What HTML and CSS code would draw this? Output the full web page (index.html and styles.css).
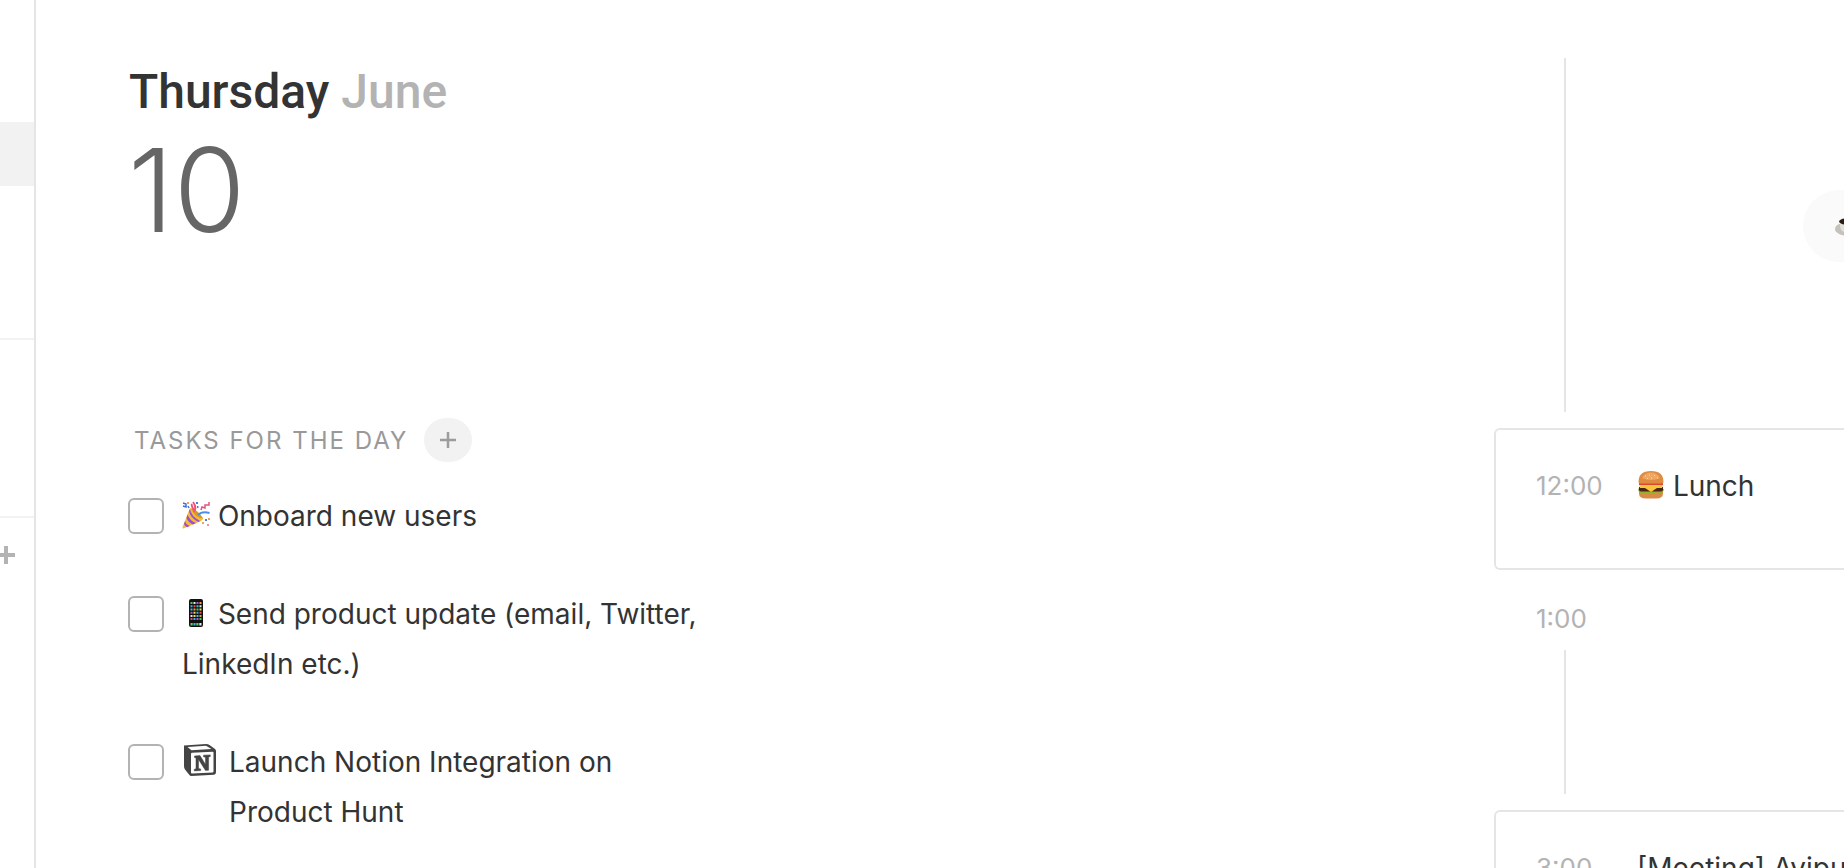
FILE: index.html
```html
<!DOCTYPE html>
<html lang="en">
<head>
<meta charset="utf-8">
<title>Thursday, June 10</title>
<link rel="stylesheet" href="styles.css">
</head>
<body>
<div class="app">
  <aside class="sidebar">
    <div class="side-block side-top"><div class="side-active"></div></div>
    <div class="side-block side-middle"></div>
    <button class="side-add" aria-label="Add list">
      <svg width="20" height="20" viewBox="0 0 20 20"><path d="M10 1v18M1 10h18" stroke="#b3b3b3" stroke-width="4"/></svg>
    </button>
  </aside>

  <main class="day">
    <h1 class="weekday">Thursday <span class="month">June</span></h1>
    <p class="date">10</p>

    <section class="tasks">
      <div class="tasks-head">
        <h2 class="tasks-title">TASKS FOR THE DAY</h2>
        <button class="add-task" aria-label="Add task">
          <svg width="16" height="16" viewBox="0 0 16 16"><path d="M8 0v16M0 8h16" stroke="#9c9c9c" stroke-width="2.500"/></svg>
        </button>
      </div>
      <ul class="task-list">
        <li class="task">
          <input class="check" type="checkbox" id="t1">
          <label class="task-label" for="t1"><svg class="emoji" viewBox="0 0 28 28" aria-hidden="true">
            <path d="M8 7 Q15 8 21 17 Q21 19 19 20 L1.500 27.500 Q0 27.500 .5 26z" fill="#f5bd35"/>
            <path d="M5.500 13.500 Q8 20 14 22 L11 23.500 Q6 21 4.500 17zM3 20 Q4 24 8 25 L5 26.300 Q2.500 25 2 23zM8 8 Q9 15 18 20 L16.500 21 Q8 17 7 10z" fill="#9b4fd6"/>
            <path d="M9 7.500 Q15 8.500 21 17.500 Q13 17 9 7.500z" fill="#d99a1c"/>
            <path d="M12 11 Q15 6 11 1M12 9 Q9 5 10 3" fill="none" stroke="#f0527c" stroke-width="2"/>
            <path d="M16 14 Q20 10 27.500 12" fill="none" stroke="#4a8df0" stroke-width="2"/>
            <path d="M1 2l3 1 0 3-3-1M6 5l1 2" fill="none" stroke="#3f6fd8" stroke-width="1.500"/>
            <path d="M19 9l1-3 3 1 0-3 4 0 0-3" fill="none" stroke="#e2547f" stroke-width="1.500"/>
            <path d="M14 1h2v2h-2zM15 5h1.500v2H15zM23 18h2v2h-2z" fill="#4a7be0"/>
            <path d="M20 21h2v2h-2zM26 17h2v2h-2zM5 1h2v2H5z" fill="#f0a255"/>
            <path d="M25 23h2v2h-2z" fill="#ef91ac"/>
          </svg> Onboard new users</label>
        </li>
        <li class="task">
          <input class="check" type="checkbox" id="t2">
          <label class="task-label" for="t2"><svg class="emoji" viewBox="0 0 28 28" aria-hidden="true">
            <rect x="7" y="0" width="14" height="28" rx="2" fill="#111"/>
            <path d="M8.500 3h2v2h-2zM14.500 9.500h2v2h-2zM17.500 19h2v2h-2z" fill="#48c964"/>
            <path d="M11.500 3h2v2h-2zM17.500 6.200h2v2h-2zM8.500 16h2v2h-2z" fill="#e8e8e8"/>
            <path d="M14.500 3h2v2h-2zM8.500 12.800h2v2h-2zM14.500 19h2v2h-2z" fill="#bb59c7"/>
            <path d="M17.500 3h2v2h-2zM11.500 9.500h2v2h-2zM17.500 16h2v2h-2z" fill="#ed9d42"/>
            <path d="M8.500 6.200h2v2h-2zM14.500 12.800h2v2h-2zM11.500 19h2v2h-2z" fill="#45aee8"/>
            <path d="M11.500 6.200h2v2h-2zM17.500 12.800h2v2h-2zM8.500 19h2v2h-2z" fill="#e84d4d"/>
            <path d="M14.500 6.200h2v2h-2zM8.500 9.500h2v2h-2zM14.500 16h2v2h-2z" fill="#3fc1d6"/>
            <path d="M17.500 9.500h2v2h-2zM11.500 12.800h2v2h-2zM11.500 16h2v2h-2z" fill="#f2dc5a"/>
            <path d="M8.500 24h2.200v2.500H8.500zM14.300 24h2.200v2.500h-2.200z" fill="#4fd273"/>
            <path d="M11.400 24h2.200v2.500h-2.200z" fill="#4aaee0"/>
            <path d="M17.300 24h2.200v2.500h-2.200z" fill="#e8e8e8"/>
          </svg> Send product update (email, Twitter, LinkedIn etc.)</label>
        </li>
        <li class="task">
          <input class="check" type="checkbox" id="t3">
          <label class="task-label with-logo" for="t3">
            <svg class="notion" viewBox="0 0 32 32" aria-hidden="true">
              <path d="M0 1.500 L22 0 Q24 0 25.500 1 L31 5 Q32 6 32 7 V28 Q32 30.500 30 30.700 L7.500 32 Q6 32 5 30.500 L1 25.500 Q0 24 0 22z" fill="#444"/>
              <path d="M3.500 3 L22 1.800 L27.500 5 L7.500 6.200z" fill="#fff"/>
              <path d="M7 9.700 Q7 8.900 8 8.800 L28.700 7.700 Q29.500 7.700 29.500 8.500 V27.500 Q29.500 28.300 28.700 28.400 L8 29.600 Q7 29.600 7 28.800z" fill="#fff"/>
              <path d="M10.500 12 L16 11.600 L21.500 20.500 V13.300 L19.500 12.800 V11.200 L26.300 10.900 V12.500 L24.600 13 V26.200 L21.500 26.400 L14.500 15.500 V24.500 L16.700 25 V26.600 L10.300 26.900 V25.300 L12 24.700 V14 L10.500 13.500z" fill="#444" stroke="#444" stroke-width=".5"/>
            </svg>
            <span>Launch Notion Integration on Product Hunt</span>
          </label>
        </li>
      </ul>
    </section>
  </main>

  <section class="timeline" aria-label="Schedule">
    <div class="free free-morning">
      <button class="pill" aria-label="Coffee break">
        <svg class="emoji" viewBox="0 0 28 28" aria-hidden="true">
          <ellipse cx="14" cy="17" rx="14" ry="7" fill="#c4c2ba"/>
          <path d="M5 9h18v4q0 8-9 8t-9-8z" fill="#e2e0d8"/>
          <ellipse cx="14" cy="9.500" rx="10" ry="3.500" fill="#2a1d16"/>
        </svg>
      </button>
    </div>
    <article class="event">
      <time class="time">12:00</time>
      <span class="event-name"><svg class="emoji" viewBox="0 0 28 28" aria-hidden="true">
        <path d="M2 20h24v2.500q0 5-7 5H9q-7 0-7-5z" fill="#d98a45"/>
        <path d="M1 18q2-2 26 0l-1 3q-3 2-6 0-3 2-6 .5-3 1.500-6 0-3 1.500-6-.5z" fill="#86b82e"/>
        <path d="M2 16h24v2.500q0 2-2 2H4q-2 0-2-2z" fill="#4b2415"/>
        <path d="M2 13.500h24L25 17h-5l-6 4-6-4H3z" fill="#fcc43a"/>
        <path d="M2 11.500h24v2.500H2z" fill="#dc4930"/>
        <path d="M1.500 11Q1.500 0 14 0t12.500 11q0 1.500-2 1.500h-21q-2 0-2-1.500z" fill="#df8b42"/>
        <path d="M5 7Q8 1.500 14 1.500T23 7Q19 9 14 9T5 7z" fill="#eda762"/>
        <path d="M8 5h1M12 4h1M17 4.500h1M14 7h1M10 7.500h1M20 7h1" stroke="#fbdca8"/>
      </svg> Lunch</span>
    </article>
    <div class="free free-afternoon">
      <time class="time">1:00</time>
    </div>
    <article class="event">
      <time class="time">3:00</time>
      <span class="event-name">[Meeting] Avipu</span>
    </article>
  </section>
</div>
</body>
</html>
```

FILE: styles.css
```css
* { box-sizing: border-box; }

body {
  margin: 0;
  background: #fff;
  color: #333;
  font-family: Inter, "Liberation Sans", sans-serif;
  font-size: 28px;
  line-height: 50px;
}

h1, h2, p, ul { margin: 0; padding: 0; }

button {
  border: 0;
  padding: 0;
  font: inherit;
  color: inherit;
  cursor: pointer;
}

.app {
  display: flex;
  height: 100vh;
  overflow: hidden;
}

/* Sidebar edge */
.sidebar {
  flex: 0 0 36px;
  border-right: 2px solid #e5e5e5;
  overflow: hidden;
}
.side-block { border-bottom: 2px solid #f2f2f2; }
.side-top { height: 340px; padding-top: 122px; }
.side-middle { height: 178px; }
.side-active { height: 64px; background: #f2f2f2; }
.side-add {
  display: flex;
  margin: 27px 0 0 -4px;
  background: none;
}

/* Day column */
.day {
  flex: 1;
  min-width: 0;
  padding: 64px 0 0 92px;
}
.weekday {
  padding-left: 1px;
  font-family: Roboto, "Liberation Sans", sans-serif;
  font-size: 48px;
  line-height: 56px;
  font-weight: 500;
}
.month { color: #b3b3b3; }
.date {
  color: #666;
  font-size: 116px;
  line-height: 140px;
  font-weight: 300;
}
.tasks { margin-top: 158px; width: 590px; }
.tasks-head {
  display: flex;
  align-items: center;
  gap: 16px;
  height: 44px;
  padding-left: 6px;
}
.tasks-title {
  padding-top: 2px;
  color: #999;
  font-size: 24px;
  font-weight: 400;
  letter-spacing: 2px;
}
.add-task {
  display: grid;
  place-items: center;
  width: 48px;
  height: 44px;
  border-radius: 24px;
  background: #f2f2f2;
}

.task-list {
  display: grid;
  gap: 48px;
  margin-top: 29px;
  list-style: none;
}
.task {
  display: flex;
  align-items: flex-start;
  gap: 18px;
}
.check {
  appearance: none;
  flex: none;
  width: 36px;
  height: 36px;
  margin: 7px 0 0;
  border: 2px solid #b3b3b3;
  border-radius: 6px;
  background: #fff;
}
.emoji {
  flex: none;
  width: 28px;
  height: 28px;
  vertical-align: -3px;
}
.with-logo { display: flex; gap: 13px; padding-right: 80px; }
.notion { flex: none; width: 32px; height: 32px; margin: 7px 0 0 2px; }

/* Timeline */
.timeline {
  flex: 0 0 350px;
  min-width: 0;
  padding-top: 58px;
}
.free {
  margin-bottom: 16px;
  background: linear-gradient(#e5e5e5, #e5e5e5) 70px 0 / 2px 100% no-repeat;
}
.free-morning { height: 354px; padding: 132px 0 0 309px; }
.pill {
  display: flex;
  align-items: center;
  width: 200px;
  height: 72px;
  padding: 0 32px;
  border-radius: 36px;
  background: #fafafa;
}
.free-afternoon {
  height: 224px;
  padding: 23px 0 0 42px;
  background-position: 70px 80px;
}
.time {
  color: #b3b3b3;
  font-size: 26px;
}
.event {
  display: flex;
  height: 142px;
  padding: 31px 0 0 40px;
  border: 2px solid #e5e5e5;
  border-right: 0;
  border-radius: 6px 0 0 6px;
  white-space: nowrap;
  overflow: hidden;
}
.event .time { flex: 0 0 101px; }
```
